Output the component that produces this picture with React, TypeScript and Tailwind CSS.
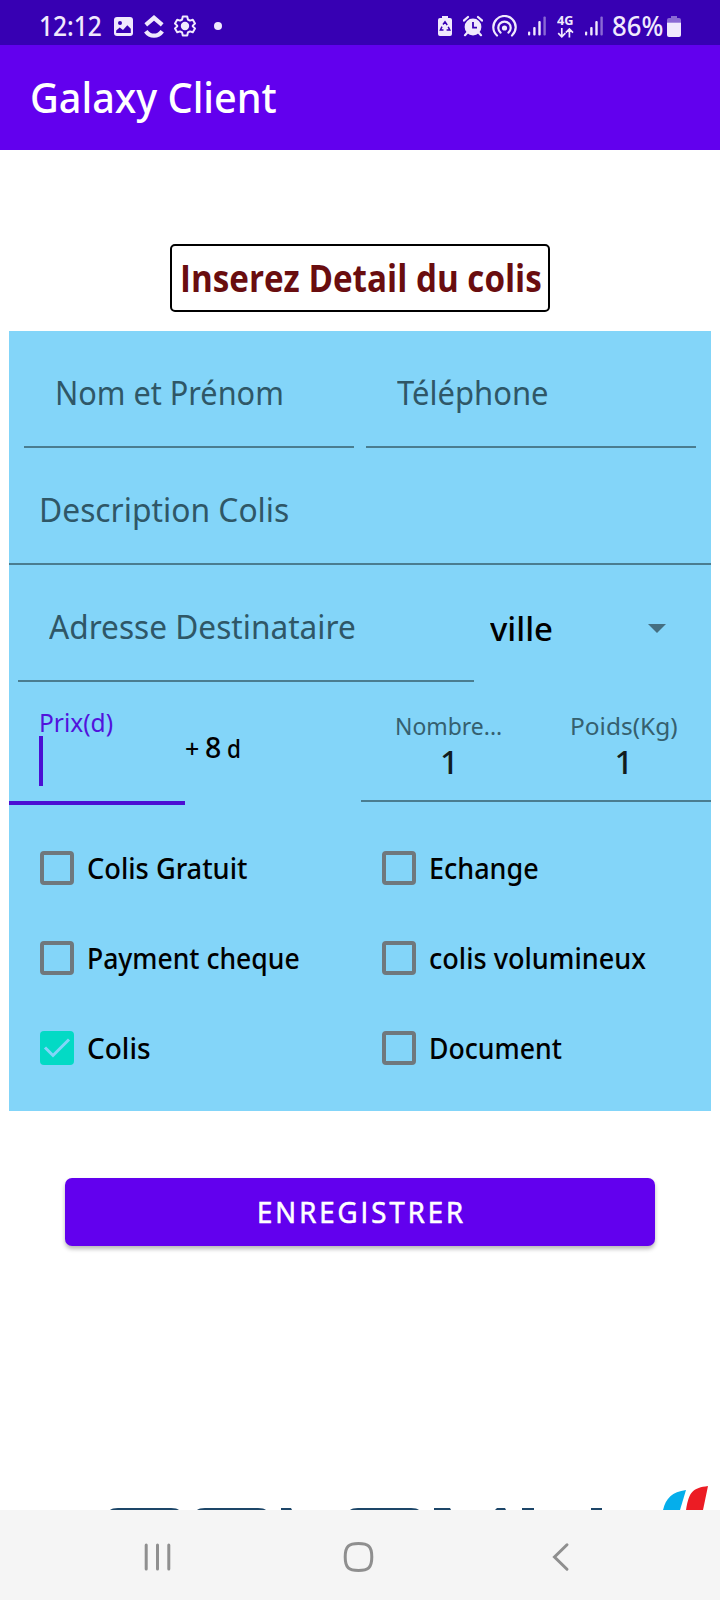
import type { ReactNode } from "react";

function Label({ className, children }: { className: string; children: ReactNode }) {
  return <span className={`inline-block origin-left whitespace-pre ${className}`}>{children}</span>;
}

function SignalIcon({ className }: { className: string }) {
  return (
    <svg className={className} width="20" height="20" viewBox="0 0 20 20" fill="#f0e9fd">
      <rect x="1" y="15.5" width="2.2" height="4" rx="1" />
      <rect x="6.2" y="11" width="2.4" height="8.5" rx="1" />
      <rect x="11.3" y="5" width="2.4" height="14.5" rx="1" />
      <rect x="16.4" y="0.5" width="2.4" height="19" rx="1" opacity="0.45" />
    </svg>
  );
}

function StatusBar() {
  return (
    <header className="flex h-[45px] items-start bg-[#3700b3] text-[#f0e9fd]">
      <Label className="ml-[39px] mt-[8px] w-[75px] text-[26.5px] font-medium leading-[36px] scale-x-[0.925]">12:12</Label>
      <svg className="mt-[17px]" width="19" height="19" viewBox="0 0 19 19">
        <rect width="19" height="19" rx="3" fill="#f0e9fd" />
        <circle cx="6" cy="6" r="2" fill="#3700b3" />
        <path d="M2.2 16V13.5L5.7 10.5L9 13L13.3 8.3L16.8 11.7V16Z" fill="#3700b3" />
      </svg>
      <svg className="ml-[11px] mt-[14px]" width="20" height="25" viewBox="0 0 20 25" fill="none" stroke="#f0e9fd" strokeWidth="4.2">
        <path d="M1.8 10.8L10 3.8L18.2 10.8" />
        <path d="M1.8 17.2C6 23.2 14 23.2 18.2 17.2" />
      </svg>
      <svg className="ml-[9px] mt-[14px]" width="24" height="24" viewBox="0 0 24 24" fill="none" stroke="#f0e9fd" strokeWidth="2" strokeLinejoin="round">
        <path d="M9.8 2.5H14.2L14.9 5.5L16.9 6.6L19.8 5.7L22 9.5L19.8 11.6V12.4L22 14.5L19.8 18.3L16.9 17.4L14.9 18.5L14.2 21.5H9.8L9.1 18.5L7.1 17.4L4.2 18.3L2 14.5L4.2 12.4V11.6L2 9.5L4.2 5.7L7.1 6.6L9.1 5.5Z" />
        <circle cx="12" cy="12" r="3.2" fill="#f0e9fd" />
      </svg>
      <span className="ml-[17px] mt-[22px] size-2 rounded-full bg-[#f0e9fd]" />

      <svg className="ml-[216px] mt-[15px]" width="14" height="22" viewBox="0 0 14 22">
        <path d="M4 1H10V3H12A2 2 0 0 1 14 5V19A2 2 0 0 1 12 21H2A2 2 0 0 1 0 19V5A2 2 0 0 1 2 3H4Z" fill="#f0e9fd" />
        <path d="M5 9.5L7 6.8L9.2 10M10.2 11.8L11.8 15H8.6M5.5 15H2.4L4 11.6" fill="none" stroke="#3700b3" strokeWidth="1.5" />
      </svg>
      <svg className="ml-[11px] mt-[15px]" width="20" height="22" viewBox="0 0 20 22">
        <circle cx="10" cy="12" r="8.4" fill="#f0e9fd" />
        <path d="M0.8 5.6L5 2M19.2 5.6L15 2M4 18L2 20.2M16 18L18 20.2" stroke="#f0e9fd" strokeWidth="2.2" strokeLinecap="round" />
        <path d="M10 7V12.6H14" fill="none" stroke="#3700b3" strokeWidth="1.8" />
      </svg>
      <svg className="ml-[9px] mt-[15px]" width="25" height="22" viewBox="0 0 25 22" fill="none" stroke="#f0e9fd" strokeWidth="2.2" strokeLinecap="round">
        <circle cx="12.5" cy="13" r="2.6" fill="#f0e9fd" stroke="none" />
        <path d="M8.6 17.6A6.2 6.2 0 1 1 16.4 17.6" />
        <path d="M5 20.5A11.2 11.2 0 1 1 20 20.5" />
      </svg>
      <SignalIcon className="ml-[10px] mt-[16px]" />
      <div className="ml-[9.5px] mt-[13px] flex w-[18.5px] flex-col">
        <Label className="text-[12.5px] font-bold leading-[15px] scale-x-[1.02]">4G</Label>
        <svg width="17" height="10" viewBox="0 0 17 10" fill="none" stroke="#f0e9fd" strokeWidth="1.7">
          <path d="M4.8 0V8.6M1.2 5.2L4.8 8.8L8.4 5.2M12.4 9.5V1.2M8.8 4.6L12.4 1L16 4.6" />
        </svg>
      </div>
      <SignalIcon className="ml-[9px] mt-[16px]" />
      <Label className="ml-[8px] mt-[8px] w-[55px] text-[26.5px] font-medium leading-[36px] scale-x-[0.97]">86%</Label>
      <svg className="mt-[15.5px]" width="14" height="21" viewBox="0 0 14 21" fill="#f0e9fd">
        <path d="M4 0H10V2H12A2 2 0 0 1 14 4V6.5H0V4A2 2 0 0 1 2 2H4Z" opacity="0.45" />
        <path d="M0 6.5H14V19A2 2 0 0 1 12 21H2A2 2 0 0 1 0 19Z" />
      </svg>
    </header>
  );
}

function CheckItem({ text, className, checked }: { text: string; className: string; checked?: boolean }) {
  return (
    <label className="flex h-[90px] w-[342px] items-center pl-[31px]">
      {checked ? (
        <span className="flex size-[34px] shrink-0 items-center justify-center rounded-[4px] bg-[#03dac5]">
          <svg width="34" height="34" viewBox="0 0 34 34" fill="none" stroke="#83d5f9" strokeWidth="3">
            <path d="M5 16.5L13 24.5L29 8.5" />
          </svg>
        </span>
      ) : (
        <span className="size-[34px] shrink-0 rounded-[4px] border-4 border-[#6f787d]" />
      )}
      <Label className={`ml-[12.5px] text-[29px] font-medium leading-[40px] text-black ${className}`}>{text}</Label>
    </label>
  );
}

const hint = "text-[32.5px] leading-[44px] text-[#2f5767]";

export default function App() {
  return (
    <div className="flex h-[1600px] w-[720px] flex-col overflow-hidden bg-white font-['Noto_Sans',sans-serif]">
      <StatusBar />
      <div className="flex h-[105px] items-center bg-[#6200ee] pb-[2px] pl-[29.5px]">
        <Label className="text-[42px] font-medium leading-[56px] text-white scale-x-[0.943]">Galaxy Client</Label>
      </div>

      <main className="flex flex-1 flex-col overflow-hidden">
        <div className="mx-auto mt-[94px] flex h-[68px] w-[380px] items-center rounded-[5px] border-2 border-black pl-[8px]">
          <Label className="font-['Open_Sans','Noto_Sans',sans-serif] text-[37.5px] font-bold leading-[50px] text-[#690d0f] scale-x-[0.885]">Inserez Detail du colis</Label>
        </div>

        <section className="mx-[9px] mt-[19px] flex h-[780px] flex-col bg-[#83d5f9]">
          <div className="flex gap-3 px-[15px]">
            <div className="flex h-[117px] w-[330px] items-center border-b-2 border-[#4a7d90] pl-[30.5px] pt-[8px]">
              <Label className={`${hint} scale-x-[0.943]`}>Nom et Prénom</Label>
            </div>
            <div className="flex h-[117px] w-[330px] items-center border-b-2 border-[#4a7d90] pl-[31px] pt-[8px]">
              <Label className={`${hint} scale-x-[0.953]`}>Téléphone</Label>
            </div>
          </div>
          <div className="flex h-[117px] items-center border-b-2 border-[#4a7d90] pl-[30px] pt-[8px]">
            <Label className={`${hint} scale-x-[0.978]`}>Description Colis</Label>
          </div>
          <div className="flex h-[117px] pl-[9px]">
            <div className="flex w-[456px] items-center border-b-2 border-[#4a7d90] pl-[31px] pt-[8px]">
              <Label className={`${hint} scale-x-[0.973]`}>Adresse Destinataire</Label>
            </div>
            <div className="flex flex-1 items-center pl-[16px] pt-[10px]">
              <Label className="w-[158px] text-[32px] font-medium leading-[44px] text-black scale-x-[1.03]">ville</Label>
              <svg width="18" height="9" viewBox="0 0 18 9" fill="#456f81">
                <path d="M0 0H18L9 9Z" />
              </svg>
            </div>
          </div>
          <div className="flex h-[123px] items-start">
            <div className="flex h-[123px] w-[176px] flex-col border-b-4 border-[#4b0fd3] pl-[30px] pt-[24px]">
              <Label className="text-[24.5px] leading-[34px] text-[#5212dc]">Prix(d)</Label>
              <span className="-mt-[4px] h-[50px] w-1 bg-[#4b0fd3]" />
            </div>
            <div className="flex h-[120px] w-[176px] items-baseline pt-[44px] text-black">
              <Label className="w-[20px] text-[25px] font-medium">+</Label>
              <Label className="w-[22px] text-[28.5px] font-medium">8</Label>
              <Label className="text-[25px] font-medium scale-x-[0.9]">d</Label>
            </div>
            <div className="flex h-[120px] flex-1 border-b-2 border-[#4a7d90]">
              <div className="flex w-[175px] flex-col pl-[34px] pt-[26.5px]">
                <Label className="text-[24px] leading-[34px] text-[#35606f] scale-x-[0.955]">Nombre...</Label>
                <Label className="-mt-[3px] pl-[45px] text-[32.5px] font-medium leading-[44px] text-[#111c20]">1</Label>
              </div>
              <div className="flex flex-1 flex-col pl-[33.5px] pt-[26.5px]">
                <Label className="text-[24px] leading-[34px] text-[#35606f] scale-x-[1.02]">Poids(Kg)</Label>
                <Label className="-mt-[3px] pl-[45px] text-[32.5px] font-medium leading-[44px] text-[#111c20]">1</Label>
              </div>
            </div>
          </div>
          <div className="mt-[18px] flex flex-wrap">
            <CheckItem text="Colis Gratuit" className="scale-x-[0.938]" />
            <CheckItem text="Echange" className="scale-x-[0.929]" />
            <CheckItem text="Payment cheque" className="scale-x-[0.915]" />
            <CheckItem text="colis volumineux" className="scale-x-[0.934]" />
            <CheckItem text="Colis" className="scale-x-[0.965]" checked />
            <CheckItem text="Document" className="scale-x-[0.918]" />
          </div>
        </section>

        <button className="mx-[65px] mt-[67px] flex h-[68px] shrink-0 items-center rounded-[7px] bg-[#6200ee] pl-[192px] shadow-[0_3px_4px_rgba(0,0,0,0.28)]">
          <Label className="font-['Open_Sans','Noto_Sans',sans-serif] text-[29px] leading-[40px] tracking-[3.2px] text-white scale-x-[0.95] [-webkit-text-stroke:0.7px_white]">ENREGISTRER</Label>
        </button>

        <svg className="mt-auto shrink-0" width="720" height="26" viewBox="0 0 720 26">
          <path d="M110 26Q112 24 118 24H171Q177 24 179 26ZM197 26Q199 24 205 24H258Q264 24 266 26ZM350 26Q352 24 358 24H411Q417 24 419 26ZM281 24H291L292 26H281ZM434 24H450L451 26H434ZM495 26L497 24H505L506 26ZM522 24H534V26H522ZM591 24H602V26H591Z" fill="#1d4668" />
          <path d="M663 26C666 14 672 8 686 6L680 26Z" fill="#05aeeb" />
          <path d="M686 26C689 7 693 4 708 2L703 26Z" fill="#ec1c24" />
        </svg>
      </main>

      <nav className="flex h-[90px] items-center bg-[#f5f5f5] pl-[144px] pt-[3px]">
        <svg width="28" height="30" viewBox="0 0 28 30" stroke="#8f8f8f" strokeWidth="3" strokeLinecap="round">
          <path d="M2.2 3V27M13.5 3V27M24.8 3V27" />
        </svg>
        <svg className="ml-[171px]" width="31" height="32" viewBox="0 0 31 32" fill="none" stroke="#8f8f8f" strokeWidth="3">
          <path d="M15.5 2.5C25 2.5 28.8 5 28.8 16S25 29.5 15.5 29.5S2.2 27 2.2 16S6 2.5 15.5 2.5Z" />
        </svg>
        <svg className="ml-[177px]" width="20" height="30" viewBox="0 0 20 30" fill="none" stroke="#8f8f8f" strokeWidth="3" strokeLinecap="round">
          <path d="M16 2.8L3.5 15L16 27.2" />
        </svg>
      </nav>
    </div>
  );
}
